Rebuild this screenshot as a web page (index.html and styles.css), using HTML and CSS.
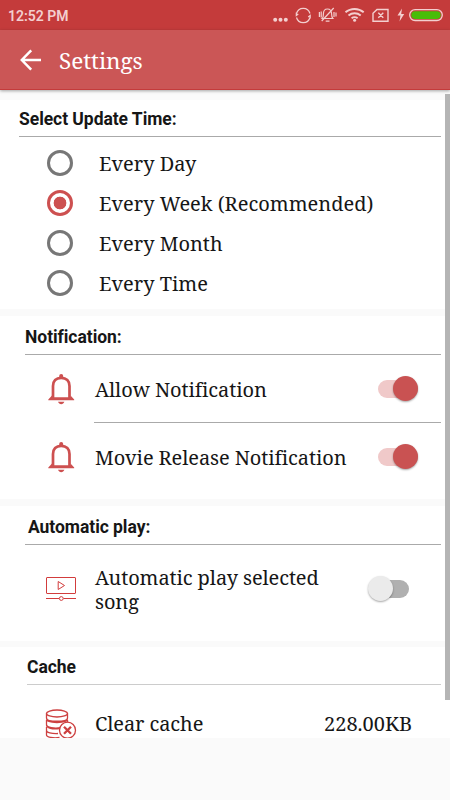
FILE: index.html
```html
<!DOCTYPE html>
<html lang="en">
<head>
  <meta charset="UTF-8" />
  <meta name="viewport" content="width=device-width, initial-scale=1.0">
  <title>Settings</title>
  <link rel="stylesheet" href="styles.css">
</head>
<body>
  <div class="status-bar">
    <span class="clock">12:52 PM</span>
    <svg class="status-icons" width="182" height="30" viewBox="-6 0 182 30" fill="none" stroke="#f3cfcf" stroke-width="1.2">
      <g fill="#f3cfcf" stroke="none">
        <circle cx="1.200" cy="19.700" r="2"/>
        <circle cx="6.500" cy="19.700" r="2"/>
        <circle cx="11.800" cy="19.700" r="2"/>
      </g>
      <g transform="translate(-5 0)">
        <path d="M27.500 13.500a7 7 0 0 1 13.500 0M41 17.500a7 7 0 0 1-13.500 0M27.300 12.500v3l2-1.500M41.200 18.500v-3l-2 1.500"/>
      </g>
      <g transform="translate(-5.800 0)">
        <path d="M54 18.500c1.200-1 1.200-2 1.200-4.500 0-3 1.500-5 4-5s4.200 2 4.200 5c0 2.500.3 3.500 1.200 4.500zM57.500 21.200h3.800M65.500 8l-12 13M51.200 12v5M53 11.500v6M65.800 12v5M67.800 12.500v4"/>
      </g>
      <g stroke-width="1.900">
        <path d="M71.500 12.300c5.200-4.500 13-4.500 18.200 0M74.500 15.500c3.600-3 8.600-3 12.200 0M77.600 18.300c1.800-1.400 4.200-1.400 6 0"/>
      </g>
      <circle cx="80.600" cy="20.200" r="1.500" fill="#f3cfcf" stroke="none"/>
      <path d="M103 9.500h11v11.800h-15v-8zM104.300 12.700l5 5M109.300 12.700l-5 5" stroke-width="1.400"/>
      <path d="M128 8.500l-4.500 7h3l-1 6 4.700-7.500h-3z" fill="#f3cfcf" stroke="none"/>
      <rect x="135.700" y="9.700" width="32.600" height="10.800" rx="5.400" stroke-width="1.300"/>
      <rect x="137.300" y="11.300" width="29.400" height="7.600" rx="3.800" fill="#48bd08" stroke="none"/>
    </svg>
  </div>

  <header class="app-bar">
    <svg width="22" height="22" viewBox="0 0 22 22" fill="none" stroke="#fff" stroke-width="2.500">
      <path d="M21 11H2M11.200 1.300L1.800 11l9.400 9.700"/>
    </svg>
    <h1>Settings</h1>
  </header>

  <main class="content">
    <section class="card update">
      <h2>Select Update Time:</h2>
      <div class="option"><span class="radio"></span><span class="label">Every Day</span></div>
      <div class="option"><span class="radio checked"></span><span class="label">Every Week (Recommended)</span></div>
      <div class="option"><span class="radio"></span><span class="label">Every Month</span></div>
      <div class="option"><span class="radio"></span><span class="label">Every Time</span></div>
    </section>

    <section class="card notification">
      <h2>Notification:</h2>
      <div class="row">
        <svg class="icon" width="32" height="32" viewBox="0 0 32 32" fill="none" stroke="#cd5050" stroke-width="2.700">
          <path d="M8 25.500V13C8 8 11 4.800 16.200 4.800s8.300 3.200 8.300 8.200v12.500"/>
          <path d="M3.300 26.500L7 22.500v1.800h18.500v-1.800l3.700 4v.7H3.300zM14.200 4.500V3a2 2 0 0 1 4 0v1.500zM13 28.800h6.400c-.6 1.700-1.800 2.400-3.200 2.400s-2.600-.7-3.200-2.400z" fill="#cd5050" stroke="none"/>
        </svg>
        <span class="label">Allow Notification</span>
        <span class="switch on"></span>
      </div>
      <div class="row divided">
        <svg class="icon" width="32" height="32" viewBox="0 0 32 32" fill="none" stroke="#cd5050" stroke-width="2.700">
          <path d="M8 25.500V13C8 8 11 4.800 16.200 4.800s8.300 3.200 8.300 8.200v12.500"/>
          <path d="M3.300 26.500L7 22.500v1.800h18.500v-1.800l3.700 4v.7H3.300zM14.200 4.500V3a2 2 0 0 1 4 0v1.500zM13 28.800h6.400c-.6 1.700-1.800 2.400-3.200 2.400s-2.600-.7-3.200-2.400z" fill="#cd5050" stroke="none"/>
        </svg>
        <span class="label">Movie Release Notification</span>
        <span class="switch on"></span>
      </div>
    </section>

    <section class="card autoplay">
      <h2>Automatic play:</h2>
      <div class="row">
        <svg class="icon" width="32" height="32" viewBox="0 0 32 32" fill="none" stroke="#d23c3c" stroke-width="1">
          <rect x="1.500" y="3.500" width="29" height="16" rx=".5"/>
          <path d="M13.200 7.500v8l6.300-4zM1 24.500h13M18.500 24.500H31"/>
          <circle cx="16.300" cy="24.500" r="1.900"/>
        </svg>
        <span class="label">Automatic play selected<br>song</span>
        <span class="switch"></span>
      </div>
    </section>

    <section class="card cache">
      <h2>Cache</h2>
      <div class="row">
        <svg class="icon" width="32" height="32" viewBox="0 0 32 32" fill="none" stroke="#cd4040" stroke-width="1.300">
          <ellipse cx="12" cy="5.500" rx="10.500" ry="3.500"/>
          <path d="M1.500 5.500V10c0 4.300 21 4.300 21 0V5.500M1.500 12v4.500c0 3 8 4.500 14 3.200M22.500 12v3M1.500 10.500c0 5.300 21 5.300 21 0M1.500 19v3.500c0 2 5 3.300 11.500 3M1.500 17c0 3 6 4.700 13 3.500M1.500 23v4c0 2.200 7 3.500 13 2.500"/>
          <circle cx="22.500" cy="22.200" r="8" fill="#fff"/>
          <path d="M19 18.700l7 7M26 18.700l-7 7" stroke-width="2.300"/>
        </svg>
        <span class="label">Clear cache</span>
        <span class="size">228.00KB</span>
      </div>
    </section>
    <div class="scrollbar"></div>
  </main>
</body>
</html>
```

FILE: styles.css
```css
* {
  box-sizing: border-box;
}

body {
  margin: 0;
  width: 450px;
  height: 800px;
  overflow: hidden;
  background: #fafafa;
  color: #161616;
  font-family: "Noto Serif", "Droid Serif", "DejaVu Serif Condensed", "DejaVu Serif", serif;
  font-stretch: condensed;
}

.status-bar {
  height: 30px;
  display: flex;
  align-items: center;
  justify-content: space-between;
  padding-left: 8px;
  background: #c43b3b;
}

.clock {
  font: 600 14px/30px Roboto, sans-serif;
  color: #f3cfcf;
  padding-top: 2px;
}

.status-icons {
  display: block;
}

.app-bar {
  height: 60px;
  display: flex;
  align-items: center;
  padding-left: 20px;
  background: #cb5656;
  border-bottom: 1px solid #c43b3b;
  box-shadow: 0 1px 3px rgba(0, 0, 0, 0.35);
}

.app-bar h1 {
  margin: 1px 0 0 17px;
  font-size: 22.5px;
  font-weight: normal;
  letter-spacing: -0.05px;
  color: #fff;
}

.content {
  position: relative;
  padding-top: 10px;
  display: flex;
  flex-direction: column;
  gap: 7px;
}

.card {
  background: #fff;
  padding-right: 9px;
  overflow: hidden;
}

.card h2 {
  margin: 0 0 0 25px;
  height: 39px;
  padding-top: 3px;
  font: bold 17.5px/36px Roboto, sans-serif;
  letter-spacing: -0.05px;
  border-bottom: 1px solid #aaa;
}

.update { height: 209px; }
.notification { height: 183px; }
.autoplay { height: 135px; }
.cache { height: 91px; margin-top: -1px; }

.update h2 {
  margin-left: 19px;
  height: 37px;
  padding-top: 1px;
  margin-bottom: 6px;
}

.autoplay h2 {
  padding-left: 3px;
}

.cache h2 {
  margin-left: 27px;
  height: 38px;
  padding-top: 2px;
  border-color: #ccc;
}

.option {
  display: flex;
  align-items: center;
  height: 40px;
  padding-left: 47px;
}

.radio {
  width: 26px;
  height: 26px;
  margin-right: 26px;
  border: 3px solid #777;
  border-radius: 50%;
}

.radio.checked {
  border-color: #cd5050;
  background: radial-gradient(circle, #cd5050 6px, transparent 6.7px);
}

.label,
.size {
  font-size: 20px;
  line-height: 24px;
  white-space: nowrap;
}

.option .label {
  padding-top: 2px;
}

.row {
  display: flex;
  align-items: center;
  height: 68px;
  padding-left: 45px;
}

.icon {
  flex: none;
  margin-right: 18px;
}

.row .label {
  flex: 1;
  letter-spacing: -0.1px;
}

.notification .label {
  padding-top: 2px;
}

.row.divided {
  background: linear-gradient(#aaa, #aaa) 94px 0 / 347px 1px no-repeat;
}

.notification h2 + .row {
  height: 67px;
  margin-bottom: 0;
}

.notification .divided {
  height: 69px;
}

.autoplay .row {
  height: 89px;
}

.cache .row {
  height: 78px;
}

.size {
  margin-right: 29px;
}

.switch {
  position: relative;
  flex: none;
  width: 32px;
  height: 18px;
  margin-right: 32px;
  border-radius: 9px;
  background: #b0b0b0;
}

.autoplay .switch {
  margin-bottom: 2px;
}

.switch::after {
  content: "";
  position: absolute;
  top: -4px;
  left: -9px;
  width: 25px;
  height: 25px;
  border-radius: 50%;
  background: #ebebeb;
  box-shadow: 0 1px 2px rgba(0, 0, 0, 0.35);
}

.switch.on {
  width: 40px;
  margin-right: 23px;
  background: #f0c9c9;
}

.switch.on::after {
  left: 15px;
  background: #c95252;
}

.scrollbar {
  position: absolute;
  top: 4px;
  right: 0;
  width: 5px;
  height: 606px;
  background: #b5b5b5;
}
```
